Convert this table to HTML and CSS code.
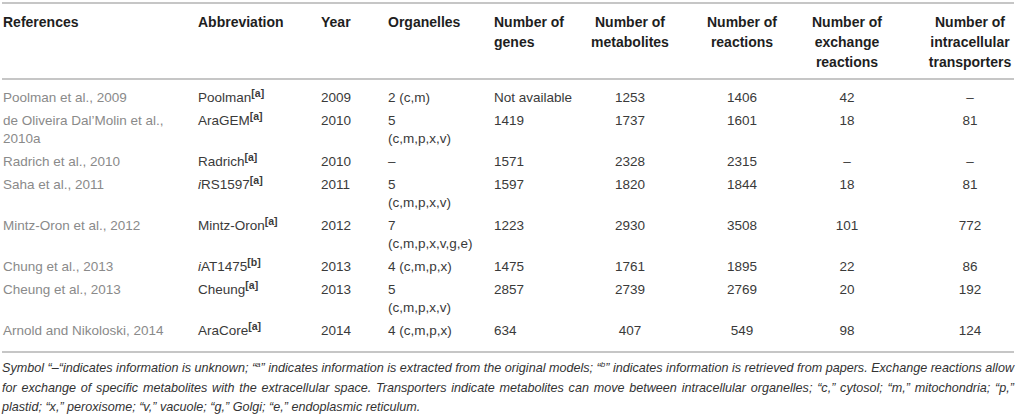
FILE: index.html
```html
<!DOCTYPE html>
<html lang="en">
<head>
    <meta charset="UTF-8">
    <meta name="viewport" content="width=device-width, initial-scale=1.0">
    <title>Genome-scale metabolic models</title>
    <link rel="stylesheet" href="styles.css">
</head>
<body>
    <div class="table-wrap">
        <table class="models">
            <colgroup>
                <col class="col-ref">
                <col class="col-abbr">
                <col class="col-year">
                <col class="col-org">
                <col class="col-genes">
                <col class="col-met">
                <col class="col-rxn">
                <col class="col-exch">
                <col class="col-trans">
            </colgroup>
            <thead>
                <tr>
                    <th>References</th>
                    <th>Abbreviation</th>
                    <th>Year</th>
                    <th>Organelles</th>
                    <th>Number of genes</th>
                    <th class="num">Number of metabolites</th>
                    <th class="num">Number of reactions</th>
                    <th class="num">Number of exchange reactions</th>
                    <th class="num last">Number of intracellular transporters</th>
                </tr>
            </thead>
            <tbody>
                <tr>
                    <td class="ref">Poolman et al., 2009</td>
                    <td>Poolman<sup class="note">[a]</sup></td>
                    <td>2009</td>
                    <td>2 (c,m)</td>
                    <td>Not available</td>
                    <td class="num">1253</td>
                    <td class="num">1406</td>
                    <td class="num">42</td>
                    <td class="num last">–</td>
                </tr>
                <tr>
                    <td class="ref">de Oliveira Dal’Molin et al.,<br>2010a</td>
                    <td>AraGEM<sup class="note">[a]</sup></td>
                    <td>2010</td>
                    <td>5<br>(c,m,p,x,v)</td>
                    <td>1419</td>
                    <td class="num">1737</td>
                    <td class="num">1601</td>
                    <td class="num">18</td>
                    <td class="num last">81</td>
                </tr>
                <tr>
                    <td class="ref">Radrich et al., 2010</td>
                    <td>Radrich<sup class="note">[a]</sup></td>
                    <td>2010</td>
                    <td>–</td>
                    <td>1571</td>
                    <td class="num">2328</td>
                    <td class="num">2315</td>
                    <td class="num">–</td>
                    <td class="num last">–</td>
                </tr>
                <tr>
                    <td class="ref">Saha et al., 2011</td>
                    <td><i>i</i>RS1597<sup class="note">[a]</sup></td>
                    <td>2011</td>
                    <td>5<br>(c,m,p,x,v)</td>
                    <td>1597</td>
                    <td class="num">1820</td>
                    <td class="num">1844</td>
                    <td class="num">18</td>
                    <td class="num last">81</td>
                </tr>
                <tr>
                    <td class="ref">Mintz-Oron et al., 2012</td>
                    <td>Mintz-Oron<sup class="note">[a]</sup></td>
                    <td>2012</td>
                    <td>7<br>(c,m,p,x,v,g,e)</td>
                    <td>1223</td>
                    <td class="num">2930</td>
                    <td class="num">3508</td>
                    <td class="num">101</td>
                    <td class="num last">772</td>
                </tr>
                <tr>
                    <td class="ref">Chung et al., 2013</td>
                    <td><i>i</i>AT1475<sup class="note">[b]</sup></td>
                    <td>2013</td>
                    <td>4 (c,m,p,x)</td>
                    <td>1475</td>
                    <td class="num">1761</td>
                    <td class="num">1895</td>
                    <td class="num">22</td>
                    <td class="num last">86</td>
                </tr>
                <tr>
                    <td class="ref">Cheung et al., 2013</td>
                    <td>Cheung<sup class="note">[a]</sup></td>
                    <td>2013</td>
                    <td>5<br>(c,m,p,x,v)</td>
                    <td>2857</td>
                    <td class="num">2739</td>
                    <td class="num">2769</td>
                    <td class="num">20</td>
                    <td class="num last">192</td>
                </tr>
                <tr>
                    <td class="ref">Arnold and Nikoloski, 2014</td>
                    <td>AraCore<sup class="note">[a]</sup></td>
                    <td>2014</td>
                    <td>4 (c,m,p,x)</td>
                    <td>634</td>
                    <td class="num">407</td>
                    <td class="num">549</td>
                    <td class="num">98</td>
                    <td class="num last">124</td>
                </tr>
            </tbody>
        </table>

        <!-- table footnote, broken where the journal layout breaks it -->
        <p class="footnote">
            <span class="fn-line">Symbol “–“indicates information is unknown; “<sup>a</sup>” indicates information is extracted from the original models; “<sup>b</sup>” indicates information is retrieved from papers. Exchange reactions allow</span>
            <span class="fn-line">for exchange of specific metabolites with the extracellular space. Transporters indicate metabolites can move between intracellular organelles; “c,” cytosol; “m,” mitochondria; “p,”</span>
            <span class="fn-line end">plastid; “x,” peroxisome; “v,” vacuole; “g,” Golgi; “e,” endoplasmic reticulum.</span>
        </p>
    </div>
</body>
</html>
```

FILE: styles.css
```css
* {
    margin: 0;
    padding: 0;
    box-sizing: border-box;
    font-family: "Liberation Sans", Arial, sans-serif;
}

body {
    background: #ffffff;
    color: #333333;
    padding: 2px 2px 0 2px;
}

.table-wrap {
    width: 1012px;
}

.models {
    width: 1012px;
    table-layout: fixed;
    border-collapse: collapse;
    font-size: 13.5px;
}

.col-ref { width: 195px; }
.col-abbr { width: 123px; }
.col-year { width: 67px; }
.col-org { width: 106px; }
.col-genes { width: 87px; }
.col-met { width: 100px; }
.col-rxn { width: 124px; }
.col-exch { width: 86px; }
.col-trans { width: 124px; }

.models thead tr {
    border-top: 2px solid #c6c6c6;
    border-bottom: 2px solid #c6c6c6;
}

.models th {
    text-align: left;
    vertical-align: top;
    font-size: 14px;
    font-weight: bold;
    color: #1e1e1e;
    line-height: 20px;
    padding: 8px 0 6px 1px;
}

.models td {
    vertical-align: top;
    line-height: 18px;
    padding: 2.5px 0 2.5px 1px;
    color: #3a3a3a;
}

.models tbody tr:first-child td {
    padding-top: 9px;
}

.models tbody tr:last-child {
    border-bottom: 2px solid #c6c6c6;
}

.models tbody tr:last-child td {
    padding-bottom: 11px;
}

.models td.ref {
    color: #8a8a8a;
}

.models .num {
    text-align: center;
    padding-left: 0;
}

.models .last {
    padding-left: 36px;
}

.note {
    font-size: 10.5px;
    font-weight: bold;
    line-height: 0;
    vertical-align: 5px;
}

.footnote {
    margin-top: 6px;
    font-size: 12.6px;
    font-style: italic;
    line-height: 19.5px;
    color: #333333;
}

.fn-line {
    display: block;
    text-align: justify;
    text-align-last: justify;
    white-space: nowrap;
}

.fn-line.end {
    text-align: left;
    text-align-last: left;
}

.footnote sup {
    font-size: 8px;
    line-height: 0;
    vertical-align: 5px;
}
```
